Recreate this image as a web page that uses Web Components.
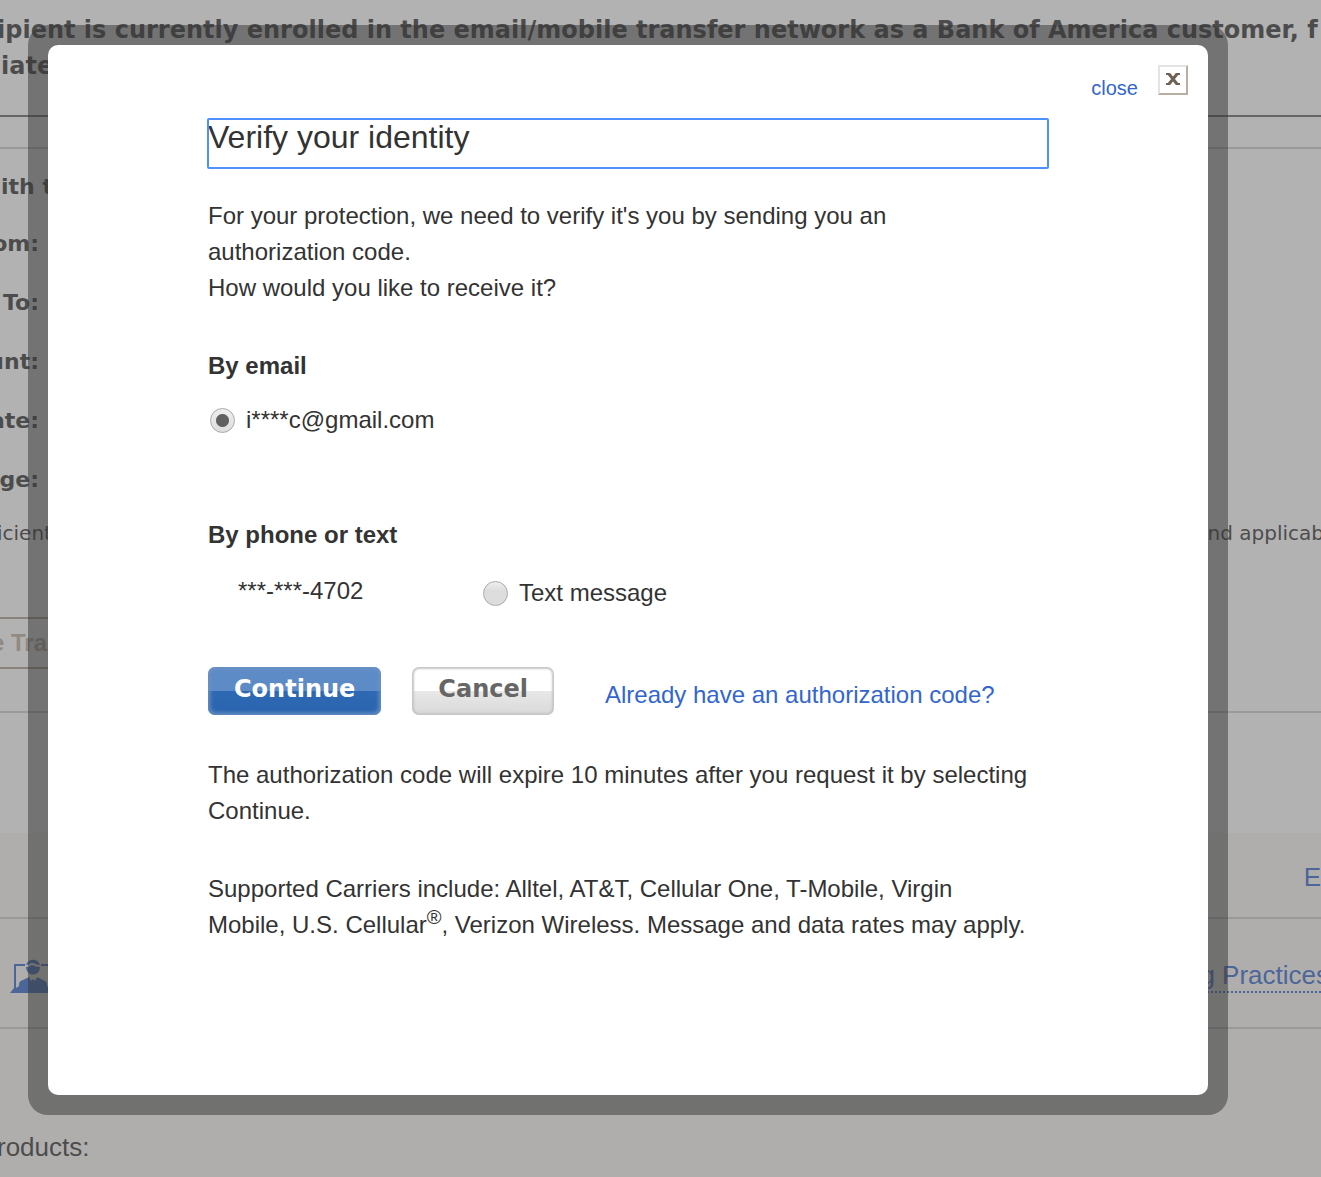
<!DOCTYPE html>
<html lang="en">
<head>
<meta charset="utf-8">
<title>Verify your identity</title>
<style>
  html, body { margin: 0; background: #f8f7f4; }
  body { font-family: "Liberation Sans", Arial, sans-serif; font-size: 24px; line-height: 36px; color: #333; }
</style>
</head>
<body>
<modal-stage>
  <transfer-page slot="page"></transfer-page>
  <modal-frame>
    <identity-form></identity-form>
  </modal-frame>
</modal-stage>

<script>
const define = (name, html) => {
  const template = document.createElement('template');
  template.innerHTML = html;
  customElements.define(name, class extends HTMLElement {
    constructor() {
      super();
      this.attachShadow({ mode: 'open' }).append(template.content.cloneNode(true));
    }
  });
};

/* Stacks the page, a grey scrim and the dialog in one grid cell */
define('modal-stage', `
  <style>
    :host { display: grid; grid-template-columns: minmax(0, 1fr); min-height: 100vh; overflow: hidden; }
    .page, .scrim { grid-area: 1 / 1; }
    .scrim { z-index: 1; background: rgba(102,102,102,.5); padding: 25px 93px 25px 28px; }
  </style>
  <div class="page"><slot name="page"></slot></div>
  <div class="scrim"><slot></slot></div>
`);

define('field-label', `
  <style>
    :host { display: flex; justify-content: flex-end; width: 42px; height: 59px; align-items: center;
      font: bold 22px/36px "DejaVu Sans", Verdana, sans-serif; white-space: nowrap; }
  </style>
  <slot></slot>
`);

define('transfer-page', `
  <style>
    :host { display: block; white-space: nowrap; margin: 0 -3px; }
    p { margin: 0; }
    .main { background: #fff; height: 833px; }
    .intro { font: bold 24px/36px "DejaVu Sans", Verdana, sans-serif; padding-top: 12px; height: 103px; }
    .intro p + p { padding-left: 4px; }
    .strip { border-top: 2px solid #666; height: 30px; }
    .details { border-top: 2px solid #ccc; padding-top: 20px; height: 448px; }
    .lead { font: bold 22px/36px "DejaVu Sans", Verdana, sans-serif; height: 45px; padding-left: 4px; }
    .note { display: flex; justify-content: space-between; padding-top: 6px; font: 20px/36px "DejaVu Sans", Verdana, sans-serif; }
    .action { border: solid #aea08e; border-width: 2px 0; width: 100px; height: 48px; line-height: 48px;
      font-weight: bold; color: #bcaea0; text-indent: -6px; }
    .end { border-top: 2px solid #ccc; margin-top: 42px; }
    .foot { background: #f8f7f4; }
    .row { display: flex; align-items: center; border-bottom: 2px solid #ccc; box-sizing: border-box; font-size: 26px; }
    .lang { justify-content: flex-end; height: 86px; padding: 4px 3px 0 0; }
    .links { justify-content: space-between; height: 110px; padding: 6px 0 0 13px; }
    a { color: #36c; text-decoration: none; }
    .dotted { border-bottom: 2px dotted #36c; line-height: 32px; margin-right: -5px; }
    .products { padding-top: 100px; font-size: 26px; }
    svg { display: block; }
  </style>
  <div class="main">
    <div class="intro">
      <p>ipient is currently enrolled in the email/mobile transfer network as a Bank of America customer, f</p>
      <p>iate</p>
    </div>
    <div class="strip"></div>
    <div class="details">
      <p class="lead">ith t</p>
      <field-label>om:</field-label>
      <field-label>To:</field-label>
      <field-label>unt:</field-label>
      <field-label>ate:</field-label>
      <field-label>ge:</field-label>
      <div class="note"><span>icient</span><span>nd applicab</span></div>
    </div>
    <div class="action">e Tra</div>
    <div class="end"></div>
  </div>
  <div class="foot">
    <div class="row lang"><a href="#">E</a></div>
    <div class="row links">
      <svg width="46" height="34" viewBox="0 0 46 34" fill="#36c" aria-hidden="true">
        <path d="M4 5h11v2H6v22l3-2c0-4 1-5 4-6l6-3 2 4 2-2 2 2 2-4 6 3c3 1 4 2 4 6l3 2V7H31V5h11v24l4 5H0l4-5z"/>
        <path d="M16 6c2-7 12-7 14 0-4 0-5-2-8-2-2 0-3 2-6 2zM16 8c3 0 4-1 6-2 3 1 5 2 8 2 0 10-14 10-14 0z"/>
      </svg>
      <a class="dotted" href="#">g Practices</a>
    </div>
    <p class="products">roducts:</p>
  </div>
`);

define('modal-frame', `
  <style>
    :host { display: block; padding: 20px; background: rgba(51,51,51,.5); border-radius: 20px; }
    section { background: #fff; padding: 20px 20px 152px; border-radius: 10px; }
    header { display: flex; justify-content: flex-end; align-items: flex-start; gap: 20px; height: 54px; }
    a { color: #36c; text-decoration: none; font-size: 20px; line-height: 46px; }
    button { width: 30px; height: 30px; padding: 0 0 2px; background: #fff; border: 2px solid; border-color: #e6e4e2 #b8aea4 #b8aea4 #e6e4e2; }
    svg { display: block; margin: auto; }
    .body { padding: 0 140px; }
  </style>
  <section role="dialog" aria-label="Verify your identity">
    <header>
      <a href="#">close</a>
      <button type="button" aria-label="Close dialog">
        <svg width="16" height="14" viewBox="0 0 16 14" fill="none" stroke="#6e6255">
          <path d="M4 2l8 10M12 2L4 12" stroke-width="3"/><path d="M1 2h4M11 2h4M1 12h4M11 12h4" stroke-width="2"/>
        </svg>
      </button>
    </header>
    <div class="body"><slot></slot></div>
  </section>
`);

define('gloss-button', `
  <style>
    :host { display: block; }
    button { display: block; height: 48px; padding: 0 26px 4px; border: 0; border-radius: 7px;
      font: bold 24px/40px "DejaVu Sans", Verdana, sans-serif; color: #666;
      background: linear-gradient(#fff 50%, #e8e8e8 50%, #d9d9d9);
      box-shadow: inset 0 0 2px 2px #c6c6c6; }
    :host([primary]) button { color: #fff;
      background: linear-gradient(#5d8bc6 50%, #2e69b3 50%, #2a64ae);
      box-shadow: inset 0 0 4px 2px #6d92c4; }
  </style>
  <button type="button"><slot></slot></button>
`);

define('identity-form', `
  <style>
    :host { display: block; }
    h1, h2, p { margin: 0; }
    h1 { font-size: 32px; font-weight: normal; line-height: 36px; height: 48px; border-bottom: 1px solid #999;
      border-radius: 1px; outline: 2px solid #4d90fe; outline-offset: -1px; }
    p { padding-right: 20px; }
    .ask { padding-top: 30px; padding-bottom: 42px; }
    h2 { font-size: 24px; line-height: 36px; }
    label { display: flex; align-items: center; gap: 11px; }
    input { appearance: none; box-sizing: border-box; width: 25px; height: 25px; margin: 0; border: 1px solid #aaa;
      border-radius: 50%; background: linear-gradient(#eee, #dcdcdc 40%, #ddd); }
    input:checked { background: radial-gradient(circle, #606060 6px, transparent 7px), linear-gradient(#eee, #ddd); }
    .email { padding: 18px 2px 79px; }
    .phone { display: flex; padding: 20px 0 56px 30px; }
    .phone span { width: 245px; }
    .phone label { padding-top: 2px; }
    .actions { display: flex; align-items: center; gap: 31px; }
    a { color: #36c; text-decoration: none; padding: 8px 0 0 20px; }
    .expire { padding-top: 42px; padding-bottom: 42px; }
    sup { font-size: 20px; line-height: 0; }
  </style>
  <form>
    <h1>Verify your identity</h1>
    <p class="ask">For your protection, we need to verify it's you by sending you an authorization code.<br>How would you like to receive it?</p>
    <h2>By email</h2>
    <div class="email"><label><input type="radio" name="channel" checked>i****c@gmail.com</label></div>
    <h2>By phone or text</h2>
    <div class="phone"><span>***-***-4702</span><label><input type="radio" name="channel">Text message</label></div>
    <div class="actions">
      <gloss-button primary>Continue</gloss-button>
      <gloss-button>Cancel</gloss-button>
      <a href="#">Already have an authorization code?</a>
    </div>
    <p class="expire">The authorization code will expire 10 minutes after you request it by selecting Continue.</p>
    <p>Supported Carriers include: Alltel, AT&amp;T, Cellular One, T-Mobile, Virgin Mobile, U.S. Cellular<sup>®</sup>, Verizon Wireless. Message and data rates may apply.</p>
  </form>
`);
</script>
</body>
</html>
